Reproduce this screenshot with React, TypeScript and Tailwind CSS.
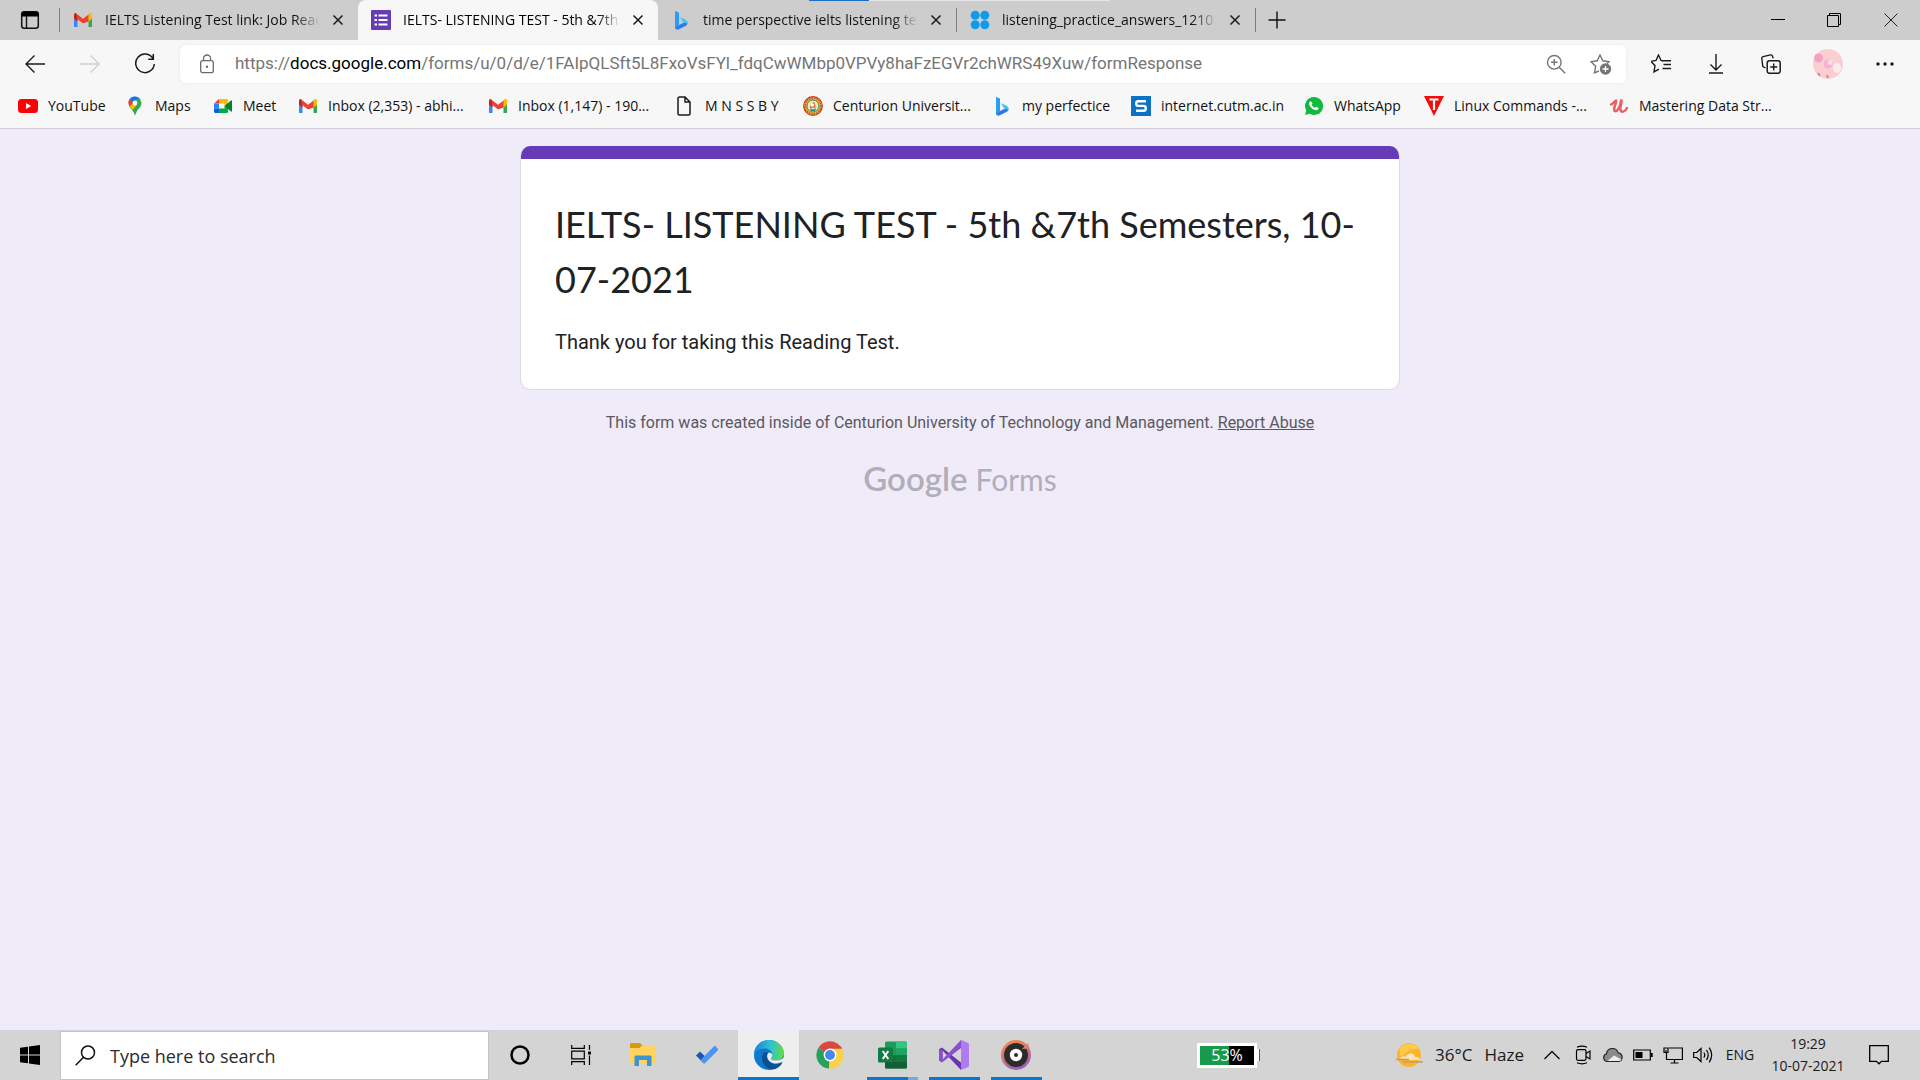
import type { ReactNode } from "react";

type SvgProps = { children: ReactNode; size?: number; box?: number; className?: string };

function Svg({ children, size = 20, box = 20, className = "" }: SvgProps) {
  return (
    <svg
      width={size}
      height={size}
      viewBox={`0 0 ${box} ${box}`}
      fill="none"
      className={`shrink-0 ${className}`}
      aria-hidden="true"
    >
      {children}
    </svg>
  );
}

/* ---------- site icons ---------- */

const Gmail = () => (
  <Svg>
    <path d="M1 17h3.5V9L1 6.300z" fill="#4285f4" />
    <path d="M15.500 17H19V6.300L15.500 9z" fill="#34a853" />
    <path d="M1 5v3.500l3.500 3V5.200L3.200 3.300C2 2.700 1 3.700 1 5z" fill="#c5221f" />
    <path d="M19 5v3.500l-3.500 3V5.200l1.300-1.900C18 2.700 19 3.700 19 5z" fill="#fbbc04" />
    <path d="M3 3.400 10 9l7-5.600-1.500 8L10 13.300l-5.500-4.200z" fill="#ea4335" />
    <path d="M15.500 5v6L10 13.300l-5.500-4.500V4.600L10 9z" fill="#ea4335" />
    <path d="M17 3.400 15.500 4.600v6.600L19 8V5c0-1.500-1-2-2-1.600z" fill="#fbbc04" />
  </Svg>
);

const FormsIcon = () => (
  <Svg>
    <rect width="20" height="20" rx="1" fill="#673ab7" />
    <path d="M3.500 5.500H6M3.500 10H6M3.500 14.500H6M7.500 5.500h9M7.500 10h9M7.500 14.500h9" stroke="#fff" strokeWidth="2.200" />
  </Svg>
);

const Bing = () => (
  <Svg>
    <path d="M4 1l4 1.500v12.800L4 18z" fill="#2a9df4" />
    <path d="M4 17.600 8 15l4-2 3.700-2.300c1.500 1.800 1 4-.8 5.100L8 19.300c-1.600.9-4 .2-4-1.700z" fill="#2f7bea" />
    <path d="M9 7.300l4.800 2c2 1 2.600 2.600 2.200 5-1-1.600-3-2-4.500-2.600z" fill="#41c8f5" />
  </Svg>
);

const FourDots = () => (
  <Svg>
    <g fill="#0e9bea">
      <circle cx="5.200" cy="5.300" r="4.500" />
      <circle cx="14.800" cy="5.300" r="4.500" />
      <circle cx="5.200" cy="14.800" r="4.500" />
      <circle cx="14.800" cy="14.800" r="4.500" />
    </g>
  </Svg>
);

const YouTube = () => (
  <Svg>
    <rect y="3" width="20" height="14" rx="3.500" fill="#f00" />
    <path d="M8 7l5.200 3L8 13z" fill="#fff" />
  </Svg>
);

const Maps = () => (
  <Svg>
    <path d="M10 .5A6.500 6.500 0 0 0 5 2.800L8.500 6z" fill="#4285f4" />
    <path d="M10 .5c2.500 0 4.500 1.300 5.600 3.200L8 11.500 3.500 7c0-3.600 3-6.500 6.500-6.500z" fill="#1a73e8" />
    <path d="M5 2.800C3 5 3 8.500 4.700 11L8 7z" fill="#ea4335" />
    <path d="M4.700 11l7.500-8.700c3.300 1 4.300 4 4.300 4.700 0 3.500-3 5.500-4.500 8L10 19.500 8.500 16z" fill="#34a853" />
    <path d="M4.700 10.600l3-3.300 4.500 1.400L7.300 14z" fill="#fbbc04" />
    <circle cx="10" cy="7" r="2.400" fill="#fff" />
  </Svg>
);

const Meet = () => (
  <Svg>
    <path d="M6 3v4.500H1z" fill="#ea4335" />
    <path d="M1 7.500h5v5H1z" fill="#2684fc" />
    <path d="M1 12.500h5V17H2.500C1.600 17 1 16.400 1 15.500z" fill="#0066da" />
    <path d="M6 3h7.500c1 0 1.500.6 1.500 1.500V8l-3.500 2.500v-3H6z" fill="#ffba00" />
    <path d="M6 12.500h5.500V10L15 12v3.500c0 1-.6 1.500-1.500 1.500H6z" fill="#00ac47" />
    <path d="M11.500 10 18 4.500c.5-.4 1 0 1 .5v10c0 .6-.5.900-1 .5z" fill="#00832d" />
  </Svg>
);

const Page = () => (
  <Svg>
    <path d="M3 2.500C3 1.600 3.500 1 4.400 1H10l5 5v11.500c0 .9-.5 1.500-1.400 1.500H4.400c-.9 0-1.400-.6-1.400-1.500zM10 1v5h5" stroke="#1b1b1b" strokeWidth="1.500" />
  </Svg>
);

const Seal = () => (
  <Svg>
    <circle cx="10" cy="10" r="9.300" fill="#e8b83a" stroke="#c8342b" strokeWidth="1.200" />
    <circle cx="10" cy="10" r="7.800" stroke="#b5522b" strokeWidth="1.200" strokeDasharray="1.500 1" />
    <circle cx="10" cy="10" r="6" fill="#f4e3b5" stroke="#3f8f4a" />
    <path d="M7 12c0-3 1.500-5 4-6 1.500 2 1 4 2 5.500z" fill="#d2694f" />
    <path d="M6.500 11.500c2 2.500 5 2.500 7 0L12 15H8z" fill="#2d7f8f" />
    <circle cx="9.300" cy="9" r="1.800" fill="#fff" />
  </Svg>
);

const SSite = () => (
  <Svg>
    <rect width="20" height="20" fill="#0b72c4" />
    <path d="M15 5.200H7.300c-1.200 0-2 .8-2 1.900v.9c0 1.100.8 1.900 2 1.900h5.400c1.200 0 2 .8 2 1.900v.9c0 1.200-.8 2-2 2H5" stroke="#fff" strokeWidth="2.400" />
  </Svg>
);

const WhatsApp = () => (
  <Svg>
    <path d="M10 1a9 9 0 0 0-7.700 13.600L1 19l4.600-1.200A9 9 0 1 0 10 1z" fill="#12b93c" />
    <path d="M7.300 5.700c-.4-.8-1.200-.7-1.700 0-1.300 1.700-.2 4.200 2 6.300 2.200 2 4.700 2.900 6.300 1.600.9-.8.900-1.500.2-1.900l-1.600-.8c-.4-.2-.7 0-1.200.7-.2.300-.5.300-.8.100-1.300-.6-2.200-1.500-2.800-2.600-.2-.3 0-.5.200-.7.700-.7.600-.9.400-1.400z" fill="#fff" />
  </Svg>
);

const RedT = () => (
  <Svg>
    <path d="M0 0h20L10 20z" fill="#f40b0b" />
    <path d="M5.500 3.500h9M10 3.500V14" stroke="#fff" strokeWidth="2.200" />
  </Svg>
);

const Udemy = () => (
  <Svg>
    <path d="M2 8.500C4 7.500 5.500 5.500 7 4.500c1 2-3 7.500-1.500 10.500 2.500 1.500 6-4.500 6.500-10.500M12.500 4.500c.5 3-3 9 0 11 2 .8 4.500-1.500 5.500-3.500" stroke="#ec5f62" strokeWidth="2.500" strokeLinecap="round" strokeLinejoin="round" />
  </Svg>
);

/* ---------- browser frame ---------- */

const CloseGlyph = () => (
  <Svg size={12} box={12}>
    <path d="M1.500 1.500l9 9M10.500 1.500l-9 9" stroke="#1b1b1b" strokeWidth="1.500" />
  </Svg>
);

function Tab({ icon, title, active = false }: { icon: ReactNode; title: string; active?: boolean }) {
  return (
    <div
      className={`flex h-10 items-center pr-[10px] ${
        active ? "w-[300px] rounded-t-lg bg-[#f7f7f7] pl-[13px]" : "w-[298px] pl-[13px]"
      }`}
    >
      <button className="flex min-w-0 flex-1 items-center gap-3 text-left">
        {icon}
        <span
          className={`min-w-0 flex-1 overflow-hidden bg-linear-to-r bg-clip-text whitespace-nowrap text-transparent ${
            active ? "from-black from-88% to-[#f7f7f7]" : "from-[#111] from-88% to-[#cdcdcd]"
          }`}
        >
          {title}
        </span>
      </button>
      <button aria-label={`Close ${title}`} className="ml-2 flex size-5 items-center justify-center">
        <CloseGlyph />
      </button>
    </div>
  );
}

const Divider = () => <span className="h-6 w-px shrink-0 bg-[#7d7d7d]" />;

function TabStrip() {
  return (
    <header className="relative flex h-10 items-center bg-[#cdcdcd] text-sm">
      <div className="absolute top-0 left-[809px] flex h-px w-[301px] bg-[#e6e6e6]">
        <span className="h-px w-[60px] bg-[#1f6fc0]" />
      </div>
      <button aria-label="Tab actions" className="flex w-[59px] justify-center">
        <Svg>
          <rect x="1.700" y="1.700" width="16.600" height="16.600" rx="2.500" stroke="#111" strokeWidth="1.500" />
          <path d="M1.500 4.500c0-2 1-3 3-3h11c2 0 3 1 3 3v2h-17z" fill="#000" />
          <path d="M6.500 6v12" stroke="#111" strokeWidth="1.400" />
        </Svg>
      </button>
      <Divider />
      <Tab icon={<Gmail />} title="IELTS Listening Test link: Job Readiness" />
      <Tab active icon={<FormsIcon />} title="IELTS- LISTENING TEST - 5th &7th Semesters" />
      <Tab icon={<Bing />} title="time perspective ielts listening test answers" />
      <Divider />
      <Tab icon={<FourDots />} title="listening_practice_answers_12101.pdf" />
      <Divider />
      <button aria-label="New tab" className="flex w-[42px] justify-center">
        <Svg size={18} box={18}>
          <path d="M9 .5v17M.5 9h17" stroke="#111" strokeWidth="1.400" />
        </Svg>
      </button>
      <div className="ml-auto flex h-full">
        <button aria-label="Minimize" className="flex w-14 items-center justify-center">
          <Svg size={14} box={14}>
            <path d="M0 6.500h14" stroke="#000" />
          </Svg>
        </button>
        <button aria-label="Restore" className="flex w-14 items-center justify-center">
          <Svg size={14} box={14}>
            <path d="M.5 2.500h11v11H.5zM2.500 2.500v-2h11v11h-2" stroke="#000" />
          </Svg>
        </button>
        <button aria-label="Close window" className="flex w-[58px] items-center justify-center">
          <Svg size={14} box={14}>
            <path d="M.5.5l13 13M13.500.5l-13 13" stroke="#222" />
          </Svg>
        </button>
      </div>
    </header>
  );
}

function ToolButton({ label, children, width = "w-[55px]" }: { label: string; children: ReactNode; width?: string }) {
  return (
    <button aria-label={label} className={`flex h-10 shrink-0 items-center justify-center ${width}`}>
      {children}
    </button>
  );
}

function Toolbar() {
  return (
    <div className="flex h-12 items-center pr-2 pl-[7px] text-[#1b1b1b]">
      <ToolButton label="Back">
        <Svg>
          <path d="M20 10H1M9.500 1.500L1 10l8.500 8.500" stroke="currentColor" strokeWidth="1.400" />
        </Svg>
      </ToolButton>
      <ToolButton label="Forward">
        <Svg className="text-[#cfcfcf]">
          <path d="M0 10h19M10.500 1.500L19 10l-8.500 8.500" stroke="currentColor" strokeWidth="1.400" />
        </Svg>
      </ToolButton>
      <ToolButton label="Refresh">
        <Svg size={22} box={22}>
          <path d="M19 5.500A9.300 9.300 0 1 0 20.300 11M19.300 1v5.200h-5" stroke="currentColor" strokeWidth="1.500" />
        </Svg>
      </ToolButton>
      <div className="ml-2 flex h-[38px] min-w-0 flex-1 items-center rounded-md bg-white pr-[14px] pl-[17px] shadow-[0_0_3px_rgba(0,0,0,0.08)]">
        <Svg className="text-[#6b6b6b]">
          <rect x="3.700" y="6.700" width="12.600" height="12" rx="2" stroke="currentColor" strokeWidth="1.300" />
          <path d="M6.500 6.500V4.500a3.500 3.500 0 0 1 7 0v2" stroke="currentColor" strokeWidth="1.300" />
          <circle cx="10" cy="12.700" r="1.200" fill="currentColor" />
        </Svg>
        <a
          href="https://docs.google.com/forms"
          className="ml-[18px] min-w-0 flex-1 truncate font-['Roboto',sans-serif] text-[17px] text-[#757575]"
        >
          https://<span className="text-black">docs.google.com</span>
          /forms/u/0/d/e/1FAIpQLSft5L8FxoVsFYl_fdqCwWMbp0VPVy8haFzEGVr2chWRS49Xuw/formResponse
        </a>
        <button aria-label="Zoom" className="text-[#757575]">
          <Svg>
            <circle cx="8.300" cy="8.300" r="6.800" stroke="currentColor" strokeWidth="1.400" />
            <path d="M13.200 13.200l6 6M8.300 5v6.600M5 8.300h6.600" stroke="currentColor" strokeWidth="1.400" />
          </Svg>
        </button>
        <button aria-label="Add to favorites" className="ml-6 text-[#757575]">
          <Svg size={22} box={22}>
            <path d="M9 18l-4.500 1.800 1.200-6.600L1 8.700l6.200-.9L10 2l2.800 5.800 6.200.9-2 2" stroke="currentColor" strokeWidth="1.400" />
            <circle cx="15.500" cy="16" r="5.700" fill="currentColor" />
            <path d="M15.500 13v6M12.500 16h6" stroke="#fff" strokeWidth="1.300" />
          </Svg>
        </button>
      </div>
      <ToolButton label="Favorites" width="ml-2 w-[54px]">
        <Svg>
          <path d="M11.500 6.800 10 6.500 7.500 1 5 6.500l-5 .9 4 4-1 6.500 5-2.700" stroke="currentColor" strokeWidth="1.400" />
          <path d="M11 6.800h9M12.500 10.500H20M11.500 14.500H20" stroke="currentColor" strokeWidth="1.400" />
        </Svg>
      </ToolButton>
      <ToolButton label="Downloads">
        <Svg>
          <path d="M10 0v16M4.500 10.500L10 16l5.500-5.500M3 19h14" stroke="currentColor" strokeWidth="1.400" />
        </Svg>
      </ToolButton>
      <ToolButton label="Collections">
        <Svg>
          <rect x="6.200" y="6.700" width="13" height="12.600" rx="2.300" stroke="currentColor" strokeWidth="1.500" />
          <path d="M12.700 9.500v7M9.200 13h7M4.500 14 1.800 12.500 .8 4.500c-.1-1 .4-1.700 1.300-1.900L9.500 .9c1-.2 1.800.3 2 1.200l.6 2.300" stroke="currentColor" strokeWidth="1.400" />
        </Svg>
      </ToolButton>
      <ToolButton label="Profile" width="w-[59px]">
        <Svg size={30} box={30}>
          <circle cx="15" cy="15" r="15" fill="#fbcfd2" />
          <circle cx="5.500" cy="9" r="4.500" fill="#f5a3c4" />
          <circle cx="15" cy="15" r="4.500" fill="#f7b2d0" />
          <circle cx="17" cy="13.500" r="2.500" fill="#fcdce6" />
          <ellipse cx="24" cy="19" rx="4" ry="5" fill="#fdecec" />
          <path d="M5 24l2 3M14 26l1 3" stroke="#e0848c" strokeWidth="2" />
        </Svg>
      </ToolButton>
      <ToolButton label="Settings and more">
        <Svg>
          <g fill="#1b1b1b">
            <circle cx="3" cy="10" r="1.700" />
            <circle cx="10" cy="10" r="1.700" />
            <circle cx="17" cy="10" r="1.700" />
          </g>
        </Svg>
      </ToolButton>
    </div>
  );
}

const bookmarks: { label: string; icon: ReactNode; width: string }[] = [
  { label: "YouTube", icon: <YouTube />, width: "w-[107px]" },
  { label: "Maps", icon: <Maps />, width: "w-[88px]" },
  { label: "Meet", icon: <Meet />, width: "w-[85px]" },
  { label: "Inbox (2,353) - abhi...", icon: <Gmail />, width: "w-[190px]" },
  { label: "Inbox (1,147) - 190...", icon: <Gmail />, width: "w-[187px]" },
  { label: "M N S S B Y", icon: <Page />, width: "w-[128px]" },
  { label: "Centurion Universit...", icon: <Seal />, width: "w-[189px]" },
  { label: "my perfectice", icon: <Bing />, width: "w-[139px]" },
  { label: "internet.cutm.ac.in", icon: <SSite />, width: "w-[173px]" },
  { label: "WhatsApp", icon: <WhatsApp />, width: "w-[120px]" },
  { label: "Linux Commands -...", icon: <RedT />, width: "w-[185px]" },
  { label: "Mastering Data Str...", icon: <Udemy />, width: "w-[187px]" },
];

function BookmarksBar() {
  return (
    <nav className="flex h-[41px] items-center border-b border-[#cfcdd9] pb-1 pl-[18px] text-sm text-[#111]">
      {bookmarks.map((b) => (
        <a key={b.label} href="#" className={`flex shrink-0 items-center gap-[10px] whitespace-nowrap ${b.width}`}>
          {b.icon}
          {b.label}
        </a>
      ))}
    </nav>
  );
}

/* ---------- form page ---------- */

function FormPage() {
  return (
    <main className="flex flex-1 flex-col items-center bg-[#f0ebf8] px-4 pt-[17px] font-['Roboto',sans-serif]">
      <section className="w-full max-w-[880px] overflow-hidden rounded-[10px] border border-t-0 border-[#dadce0] bg-white">
        <div className="h-[13px] bg-[#673ab7]" />
        <div className="px-[34px] pt-[38px] pb-8">
          <h1 className="font-['Lato',sans-serif] text-4xl leading-[55px] text-[#202124]">
            IELTS- LISTENING TEST - 5th &amp;7th Semesters, 10-07-2021
          </h1>
          <p className="mt-5 text-xl leading-[30px] text-[#202124]">Thank you for taking this Reading Test.</p>
        </div>
      </section>
      <p className="mt-[21px] text-base leading-6 text-[#5a5762]">
        This form was created inside of Centurion University of Technology and Management.{" "}
        <a href="#" className="underline">
          Report Abuse
        </a>
      </p>
      <a href="#" className="mt-[23px] flex items-baseline gap-2 font-['Lato',sans-serif] leading-10 text-[#b1aeb9]">
        <span className="text-[33px] font-semibold">Google</span>
        <span className="text-[30px]">Forms</span>
      </a>
    </main>
  );
}

/* ---------- taskbar ---------- */

const Explorer = () => (
  <Svg size={28} box={28}>
    <path d="M1 3.500C1 2.700 1.500 2 2.400 2H11l2.500 2.500V8H1z" fill="#d69a12" />
    <path d="M1 7h9.500L13 4.500h12.500c.9 0 1.500.600 1.500 1.500v17H1z" fill="#ffd45e" />
    <path d="M5.500 25v-9c0-1 .600-1.500 1.500-1.500h14c.9 0 1.500.500 1.500 1.500v9H18v-6h-8v6z" fill="#3d94cf" />
  </Svg>
);

const Todo = () => (
  <Svg size={24} box={24}>
    <path d="M1 12.500l4-4 7.500 7.300-4.200 4.200z" fill="#1b56b0" />
    <path d="M8.300 20 5.500 17 19 3.200c.5-.5 1-.5 1.500 0l2.400 2.500c.4.500.4 1 0 1.500L10 20.200c-.6.500-1.200.400-1.700-.2z" fill="#4a94f2" />
  </Svg>
);

const Edge = () => (
  <Svg size={30} box={30}>
    <defs>
      <linearGradient id="edgeTop" x1="2" y1="10" x2="29" y2="12" gradientUnits="userSpaceOnUse">
        <stop stopColor="#1e8ad6" />
        <stop offset=".5" stopColor="#2cc0d8" />
        <stop offset="1" stopColor="#5fdc4a" />
      </linearGradient>
    </defs>
    <circle cx="15" cy="15" r="15" fill="#0f78cc" />
    <path d="M0 15C0 6 7 0 15 0s15 6 15 13c0 5-4 7.500-8.500 7.500-3 0-4.500-1-4.500-2 0-.8 1.300-1.500 1.300-4 0-3.500-3.300-6-8-6C5 8.500 1.500 11 0 15z" fill="url(#edgeTop)" />
    <path d="M11 12c-5 4-4 14 6 17.500C22 30 27 26 28.500 22.500 24 25 17 25 14 20c-1.500-2.500-1-5 .5-7z" fill="#0b4f94" />
    <path d="M14.600 12.700c-2.600 2.800-1.600 7 2 9.200 4 2.400 8.500 1.800 12.800-.6.600-1.300.6-2.600.6-4-2 2.200-5 3.200-8.500 3.200-3 0-4.500-1-4.500-2 0-.8 1.300-1.500 1.300-3.700 0-1-1.200-2.300-3.700-2.100z" fill="#eee" />
  </Svg>
);

const Chrome = () => (
  <Svg size={28} box={28}>
    <path d="M14 14 2.300 7A13.600 13.600 0 0 1 25.800 7.200z" fill="#d9493c" />
    <path d="M14 14l11.800-6.800A13.600 13.600 0 0 1 13 27.600z" fill="#fdd04a" />
    <path d="M14 14l-1 13.600A13.600 13.600 0 0 1 2.300 7z" fill="#27a05a" />
    <path d="M14 7.500h12L20 15zM19.500 17 13 27.600l.5-8z" fill="#fdd04a" />
    <path d="M14 7.500h12.100L25 5.500H10z" fill="#d9493c" />
    <path d="M8.700 17.200 2.300 7l-.5 1 5 9z" fill="#27a05a" />
    <circle cx="14" cy="14" r="6.400" fill="#fff" />
    <circle cx="14" cy="14" r="5" fill="#4688f1" />
  </Svg>
);

const Excel = () => (
  <Svg size={30} box={30}>
    <rect x="8" y="1.500" width="22" height="27" rx="1.500" fill="#1c9c5c" />
    <path d="M19 1.500h9.500c1 0 1.500.5 1.500 1.500v5.500H19z" fill="#33c481" />
    <path d="M19 8.500h11v6.500H19z" fill="#1fa463" />
    <path d="M8 15h11v6.500H8z" fill="#15713f" />
    <path d="M19 15h11v6.500H19z" fill="#107c41" />
    <path d="M8 21.500h22V27c0 1-.5 1.500-1.500 1.500h-19C8.500 28.500 8 28 8 27z" fill="#185c37" />
    <rect x="1" y="7.500" width="15" height="15" rx="1.500" fill="#107c41" />
    <path d="M5.700 11l5.600 8M11.300 11l-5.600 8" stroke="#fff" strokeWidth="2" />
  </Svg>
);

const VisualStudio = () => (
  <Svg size={30} box={30}>
    <path d="M0 9.300 3 7.500l19 15V30L3.500 10.500V21L0 20.500z" fill="#6b35b0" />
    <path d="M0 20.700 3 22.500 22 8V0L3.500 19.500V9.500L0 10z" fill="#8a4ed0" />
    <path d="M22 0l6.800 2.800c.8.400 1.200 1 1.200 1.700v21c0 .8-.4 1.300-1.200 1.700L22 30z" fill="#b07af2" />
  </Svg>
);

const Groove = () => (
  <Svg size={30} box={30}>
    <defs>
      <linearGradient id="grooveRing" x1="8" y1="0" x2="20" y2="30" gradientUnits="userSpaceOnUse">
        <stop stopColor="#f08a4b" />
        <stop offset=".5" stopColor="#c9767c" />
        <stop offset="1" stopColor="#8f5fc4" />
      </linearGradient>
    </defs>
    <circle cx="15" cy="15" r="15" fill="url(#grooveRing)" />
    <circle cx="15" cy="15" r="12" fill="#2d2b2c" />
    <path d="M21 9l6-6 1.500 5.500z" fill="#dc8270" />
    <circle cx="15" cy="15" r="6.200" fill="#fff" />
    <circle cx="15" cy="15" r="2" fill="#2d2b2c" />
  </Svg>
);

type AppProps = { label: string; children: ReactNode; state?: "idle" | "open" | "stacked" | "active"; width?: string };

function TaskApp({ label, children, state = "idle", width = "w-[62px]" }: AppProps) {
  return (
    <button aria-label={label} className={`flex h-[50px] flex-col ${width} ${state === "active" ? "bg-[#eeeeee]" : ""}`}>
      <span className="flex h-[47px] w-full items-center justify-center pt-[3px]">{children}</span>
      {state === "active" && <span className="h-[3px] w-full bg-[#0c75cc]" />}
      {(state === "open" || state === "stacked") && (
        <span className="mx-auto flex h-[3px] w-[51px] justify-end bg-[#0c75cc]">
          {state === "stacked" && <span className="h-[3px] w-[10px] bg-[#76a9d8]" />}
        </span>
      )}
    </button>
  );
}

function Taskbar() {
  return (
    <footer className="flex h-[50px] items-center bg-[#d4d4d4] text-[#1a1a1a]">
      <button aria-label="Start" className="flex w-[60px] justify-center">
        <Svg>
          <path d="M0 2.800 8 1.700v7.800H0zM9 1.500 20 0v9.500H9zM0 10.500h8v7.800L0 17.200zM9 10.500h11V20L9 18.500z" fill="#000" />
        </Svg>
      </button>
      <label className="flex h-[49px] w-[429px] items-center gap-[14px] self-end border border-[#c4c4c4] bg-white pl-[14px]">
        <Svg size={21} box={21}>
          <circle cx="13" cy="7.500" r="6.500" stroke="#111" strokeWidth="1.500" />
          <path d="M8.500 12.300.700 20.300" stroke="#111" strokeWidth="1.500" />
        </Svg>
        <input
          aria-label="Type here to search"
          placeholder="Type here to search"
          className="min-w-0 flex-1 text-lg outline-none placeholder:text-[#2b2b2b]"
        />
      </label>
      <TaskApp label="Cortana">
        <Svg>
          <circle cx="10" cy="10" r="8.500" stroke="#000" strokeWidth="2.500" />
        </Svg>
      </TaskApp>
      <TaskApp label="Task view" width="w-[59px]">
        <Svg>
          <path d="M.7 0v3.300h12.600V0M.7 20v-3.300h12.600V20M.7 6.200h12.600v7.600H.7zM18.500 0v5M18.500 10.500V20" stroke="#000" strokeWidth="1.200" />
          <path d="M17 6.500h3v3h-3z" fill="#000" />
        </Svg>
      </TaskApp>
      <TaskApp label="File Explorer" width="w-[66px]">
        <Explorer />
      </TaskApp>
      <TaskApp label="To Do">
        <Todo />
      </TaskApp>
      <TaskApp label="Microsoft Edge" state="active" width="w-[61px]">
        <Edge />
      </TaskApp>
      <TaskApp label="Google Chrome">
        <Chrome />
      </TaskApp>
      <TaskApp label="Excel" state="stacked">
        <Excel />
      </TaskApp>
      <TaskApp label="Visual Studio" state="open">
        <VisualStudio />
      </TaskApp>
      <TaskApp label="Groove Music" state="open">
        <Groove />
      </TaskApp>

      <div className="ml-auto flex items-center">
        <div className="flex items-center">
          <div className="flex h-[25px] w-[60px] items-center justify-center border-[3px] border-white bg-linear-to-r from-[#189a4a] from-53% to-black to-53% text-base leading-none text-white">
            53%
          </div>
          <span className="h-3 w-[3px] border-r border-[#555] bg-white" />
        </div>
        <button className="ml-[135px] flex items-center gap-3 text-[17px]">
          <Svg size={28} box={28}>
            <circle cx="14" cy="14" r="12" fill="#fbb42c" />
            <path d="M4 8a12 12 0 0 1 20 0c-6-1-14 3-18 9z" fill="#ffd25a" opacity=".7" />
            <path d="M5 18c1-3 4-3.500 6-2 1.500-5 9-4 9 0 3-.5 5 1 5 3H5z" fill="#f7e3bf" />
            <path d="M1 18.500h13M8 21h20" stroke="#c79a64" strokeWidth="1.500" />
          </Svg>
          <span>36°C</span>
          <span>Haze</span>
        </button>
        <div className="ml-5 flex items-center gap-[10px]">
          <button aria-label="Show hidden icons" className="mr-[3px]">
            <Svg size={16} box={16}>
              <path d="M.5 12 8 4.500l7.500 7.500" stroke="#111" strokeWidth="1.400" />
            </Svg>
          </button>
          <button aria-label="Meet now">
            <Svg>
              <rect x="3.500" y="4.700" width="9.500" height="10.600" rx="1.500" stroke="#000" strokeWidth="1.200" />
              <path d="M13 8.500l4-2.500v8l-4-2.500M4 2.200Q9 .2 14 2.200M4 17.800q5 2 10 0" stroke="#000" strokeWidth="1.200" />
            </Svg>
          </button>
          <button aria-label="OneDrive">
            <Svg>
              <path d="M4.500 16.500a4 4 0 0 1-1-7.800C4 5 7 3.500 9.500 3.500c3 0 5 1.700 5.700 4.300a4.400 4.400 0 0 1 .3 8.700z" fill="#8b8b8b" stroke="#222" strokeWidth="1.200" />
              <path d="M4.500 15.900 11 10.500l7.500 4c-.7 1-1.700 1.400-3 1.400z" fill="#ededed" />
            </Svg>
          </button>
          <button aria-label="Battery">
            <Svg>
              <path d="M.7 5h16.600v10H.7z" stroke="#000" strokeWidth="1.200" />
              <path d="M2.500 7h7v6h-7zM18 8h1.700v4H18z" fill="#000" />
            </Svg>
          </button>
          <button aria-label="Network">
            <Svg>
              <path d="M6 3h13.400v11.500H3.500V8M11.500 14.500V18M7.500 18h8" stroke="#000" strokeWidth="1.200" />
              <path d="M1 3h4v4.500H1zM3 5v3" stroke="#000" strokeWidth="1.200" />
            </Svg>
          </button>
          <button aria-label="Volume">
            <Svg>
              <path d="M.7 7.500h3L8 3.500v13l-4.300-4h-3zM10.800 7.500q2 2.500 0 5M13.500 5q3.500 5 0 10M16.200 2.700q5 7.300 0 14.600" stroke="#000" strokeWidth="1.200" />
            </Svg>
          </button>
        </div>
        <button className="ml-3 w-[30px] text-sm">ENG</button>
        <time className="ml-3 flex w-[82px] flex-col items-center text-sm leading-[22px]">
          <span>19:29</span>
          <span>10-07-2021</span>
        </time>
        <button aria-label="Notifications" className="mr-[31px] ml-5">
          <Svg>
            <path d="M.7.700h18.600v15.600h-6.800L10 18.800l-2.500-2.500H.7z" stroke="#000" strokeWidth="1.300" />
          </Svg>
        </button>
      </div>
    </footer>
  );
}

export default function App() {
  return (
    <div className="flex min-h-screen flex-col bg-[#f7f7f7] font-['Open_Sans',sans-serif]">
      <TabStrip />
      <Toolbar />
      <BookmarksBar />
      <FormPage />
      <Taskbar />
    </div>
  );
}
